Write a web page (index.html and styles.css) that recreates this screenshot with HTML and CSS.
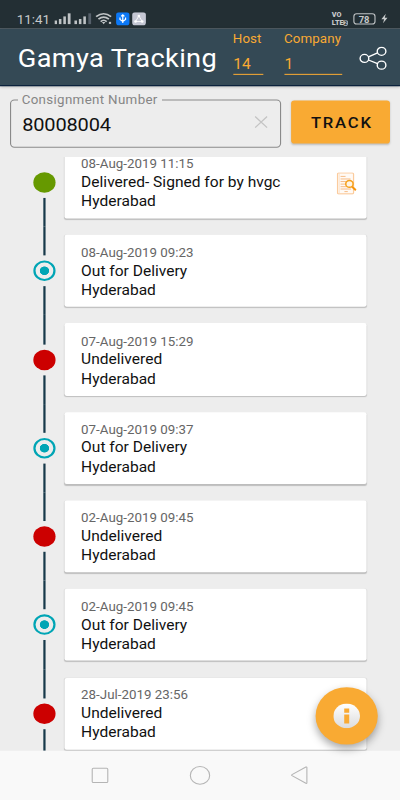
FILE: index.html
```html
<!DOCTYPE html>
<html lang="en">
<head>
<meta charset="utf-8">
<title>Gamya Tracking</title>
<link rel="stylesheet" href="styles.css">
</head>
<body>
<div class="screen">
  <div class="status">
    <span class="clock">11:41</span>
    <svg class="signals" width="97" height="14" viewBox="0 0 97 14">
      <g fill="#bfc3c5"><rect x="0" y="8" width="2.3" height="3.5"/><rect x="4" y="6.5" width="2.3" height="5"/><rect x="8" y="4" width="2.3" height="7.5"/><rect x="12" y="1" width="2.5" height="10.5"/>
      <rect x="18" y="8" width="2.3" height="3.5"/><rect x="22" y="6.5" width="2.3" height="5"/><rect x="26" y="4" width="2.3" height="7.5"/></g>
      <rect x="30.5" y="1" width="2.5" height="10.5" fill="#56606a"/>
      <g fill="none" stroke="#bfc3c5" stroke-width="1.6"><path d="M37.500 4.300Q44.300 -1.500 51 4.300"/><path d="M39.600 6.700Q44.300 2.500 49 6.700"/><path d="M41.600 9Q44.300 6.500 47 9"/></g>
      <path d="M42.700 9.500h3.200l-1.600 2.200z" fill="#bfc3c5"/><rect x="49" y="9.300" width="2" height="2" fill="#bfc3c5"/>
      <rect x="55.500" y="0" width="12" height="12.700" rx="2.500" fill="#0c78f6"/>
      <path d="M61.500 2.500v8M59 5v2l2.500 2 2.500-2V5M60 4l1.500-1.500L63 4" fill="none" stroke="#fff" stroke-width="1.100"/>
      <rect x="70" y="0" width="12.300" height="12.700" rx="2.500" fill="#c5c7d3"/>
      <path d="M76 3.500l-3 5.500h6z" fill="none" stroke="#fff" stroke-width=".8"/><g fill="#fff"><circle cx="76" cy="3.600" r="1.200"/><circle cx="73" cy="9" r="1.200"/><circle cx="79" cy="9" r="1.200"/></g>
    </svg>
    <span class="volte"><span>VO</span><span>LTE<b>2</b></span></span>
    <span class="battery">78</span>
    <svg class="bolt" width="6" height="10" viewBox="0 0 6 10"><path d="M4.200.3L.2 5.700h2.500l-1 4L5.800 4.200H3.300z" fill="#c6c9ca"/></svg>
  </div>
  <header class="appbar">
    <h1>Gamya Tracking</h1>
    <div class="field host"><label>Host</label><span>14</span></div>
    <div class="field company"><label>Company</label><span>1</span></div>
    <svg class="share" width="26" height="24" viewBox="0 0 26 24" fill="none" stroke="#fff" stroke-width="1.250"><circle cx="5" cy="12" r="3.900"/><circle cx="20.400" cy="5" r="3.900"/><circle cx="20.400" cy="18.500" r="3.900"/><path d="M8.600 10.400l8.200-3.800M8.600 13.500l8.200 3.600"/></svg>
  </header>
  <div class="search">
    <fieldset class="number"><legend>Consignment Number</legend>
      <div class="value"><span>80008004</span><svg width="12" height="12" viewBox="0 0 12 12"><path d="M.6.6l10.800 10.800M11.400.6L.6 11.400" stroke="#c4c4c4" stroke-width="1.200"/></svg></div>
    </fieldset>
    <button class="track">TRACK</button>
  </div>
  <main class="list">
    <div class="row first"><div class="rail"><i></i><b class="dot green"></b><i></i></div><div class="card"><time>08-Aug-2019 11:15</time><p>Delivered- Signed for by hvgc</p><p>Hyderabad</p>
      <svg class="doc" width="18" height="22" viewBox="0 0 18 22" fill="none"><rect x=".7" y=".7" width="14.500" height="20.300" rx="1" fill="#fffaf5" stroke="#fbcb9d" stroke-width="1.100"/><path d="M2.200 1v20" stroke="#fbdcc0" stroke-width=".8"/><path d="M3.500 4h4.500M3.500 6.500h9M3.500 9h5M3.500 11.500h5M3.500 14h6M3.500 16.300h9.500M7 18.800h3" stroke="#f6b983" stroke-width=".9"/><circle cx="11.500" cy="11.300" r="3.300" fill="#fff4e5" stroke="#f6a11c" stroke-width="1.400"/><path d="M13.800 14l3.500 3.500" stroke="#f6950c" stroke-width="1.900"/></svg></div></div>
    <div class="row"><div class="rail"><i></i><b class="dot ring"></b><i></i></div><div class="card"><time>08-Aug-2019 09:23</time><p>Out for Delivery</p><p>Hyderabad</p></div></div>
    <div class="row"><div class="rail"><i></i><b class="dot red"></b><i></i></div><div class="card"><time>07-Aug-2019 15:29</time><p>Undelivered</p><p>Hyderabad</p></div></div>
    <div class="row"><div class="rail"><i></i><b class="dot ring"></b><i></i></div><div class="card"><time>07-Aug-2019 09:37</time><p>Out for Delivery</p><p>Hyderabad</p></div></div>
    <div class="row"><div class="rail"><i></i><b class="dot red"></b><i></i></div><div class="card"><time>02-Aug-2019 09:45</time><p>Undelivered</p><p>Hyderabad</p></div></div>
    <div class="row"><div class="rail"><i></i><b class="dot ring"></b><i></i></div><div class="card"><time>02-Aug-2019 09:45</time><p>Out for Delivery</p><p>Hyderabad</p></div></div>
    <div class="row"><div class="rail"><i></i><b class="dot red"></b><i></i></div><div class="card"><time>28-Jul-2019 23:56</time><p>Undelivered</p><p>Hyderabad</p></div></div>
  </main>
  <nav class="nav">
    <svg width="360" height="48" viewBox="0 0 360 48" fill="none" stroke="#b5b5b5" stroke-width="1"><rect x="83" y="17" width="14" height="14" rx="1"/><circle cx="180" cy="24" r="8.700"/><path d="M276.200 16.400v14.800q0 .9-.9.500l-12.500-7.400q-.6-.5 0-1l12.500-7.400q.9-.4.900.5z"/></svg>
  </nav>
  <div class="fab"><svg width="24" height="24" viewBox="0 0 24 24"><defs><linearGradient id="g" x2="0" y2="1"><stop stop-color="#fff"/><stop offset="1" stop-color="#dcdcdc"/></linearGradient></defs><circle cx="12" cy="12" r="12" fill="url(#g)"/><path d="M9.800 4.700h4.500v4.300H9.800zM9.800 10.700h4.500v8.700H9.800z" fill="#f9aa33"/></svg></div>
</div>
</body>
</html>
```

FILE: styles.css
```css
* { box-sizing: border-box; margin: 0; padding: 0; }
html, body { width: 400px; height: 800px; overflow: hidden; }
body { font-family: Roboto, "Liberation Sans", sans-serif; color: #1a1a1a; background: #ededed; }
/* 360x780 dp layout stretched to the window */
.screen { position: relative; width: 360px; height: 780px; transform: scale(1.11111, 1.025641); transform-origin: 0 0; display: flex; flex-direction: column; background: #ededed; overflow: hidden; }
.status { height: 28.300px; flex: none; background: #232f34; color: #c6c9ca; display: flex; align-items: flex-start; padding: 11.700px 0 0 15.200px; }
.clock { width: 34px; flex: none; font-size: 12px; line-height: 14px; letter-spacing: 0; font-weight: 400; }
.signals { flex: none; }
.volte { flex: none; margin-left: 152.500px; width: 16px; font-size: 6.500px; line-height: 7px; font-weight: 900; letter-spacing: -.1px; display: flex; flex-direction: column; }
.volte span { display: flex; align-items: center; white-space: nowrap; height: 7px; }
.volte b { background: #c6c9ca; color: #232f34; font-size: 5px; line-height: 5px; border-radius: 1px; padding: 0 .5px; }
.battery { flex: none; width: 20px; height: 11.500px; margin: 1px 0 0 3px; border: 1px solid #bfc3c5; border-radius: 3px; font-size: 8.500px; line-height: 10px; font-weight: 700; text-align: center; }
.bolt { flex: none; margin: 1.500px 0 0 5px; }
.appbar { height: 55.700px; flex: none; background: #344955; border-bottom: 1px solid #051c3a; display: flex; box-shadow: 0 1px 3px rgba(0,0,0,.25); padding-left: 16px; }
h1 { width: 193.500px; flex: none; font-size: 24.500px; line-height: 56px; font-weight: 400; color: #fff; letter-spacing: .3px; white-space: nowrap; padding-top: 1px; }
.field { flex: none; color: #f9aa33; display: flex; flex-direction: column; margin-right: 18.500px; }
.field label { font-size: 12px; line-height: 14px; margin-top: 2.500px; letter-spacing: .1px; }
.field span { font-size: 14px; line-height: 17px; margin-top: 7.500px; height: 21px; padding-left: .5px; border-bottom: 1.200px solid #f9aa33; padding-top: 1.500px; }
.host { width: 27.500px; }
.company { width: 52px; }
.share { flex: none; margin: 16.500px 0 0 -3.500px; }
.search { height: 69.500px; flex: none; display: flex; padding: 6.500px 0 0 9px; }
.number { width: 244px; height: 53.500px; border: 1px solid #8a8a8a; border-radius: 4px; padding: 0 11px 0 10px; }
legend { font-size: 12px; line-height: 14px; color: #858585; letter-spacing: .3px; padding: 0 4px; margin-left: -4.500px; }
.value { display: flex; align-items: center; justify-content: space-between; font-size: 18px; height: 31px; padding-top: 3px; color: #111; letter-spacing: -.15px; }
.value svg { margin-top: -4px; }
.track { width: 89px; height: 42px; margin: 7.500px 0 0 9.200px; border: 0; border-radius: 3px; background: #f9aa33; box-shadow: 0 1px 2px rgba(0,0,0,.2); font: 500 15px Roboto, sans-serif; letter-spacing: 1.600px; padding: 2px 0 0 2px; color: #111; }
.list { flex: 1; overflow: hidden; min-height: 0; }
.row { display: flex; height: 86.300px; }
.first { margin-top: -18.700px; }
.rail { flex: none; width: 43px; padding-left: 37px; display: flex; flex-direction: column; align-items: center; }
.rail i { flex: none; width: 2px; height: 28.150px; background: #17394a; }
.first .rail i:first-child { visibility: hidden; }
.dot { width: 20px; height: 20px; border-radius: 50%; margin: 5px 0; flex: none; }
.green { background: #669900; }
.red { background: #cc0000; }
.ring { border: 2px solid #00a5b5; background: radial-gradient(circle, #00a5b5 3.900px, transparent 4.500px); }
.card { position: relative; width: 272.300px; height: 70.200px; margin: 8px 0 0 15px; padding: 9.500px 0 0 15px; background: #fff; border-radius: 2px; box-shadow: 0 1px 1px rgba(0,0,0,.2); }
time { display: block; font-size: 12px; line-height: 16px; color: #666; }
.card p { font-size: 14px; line-height: 19px; white-space: nowrap; color: #111; }
.doc { position: absolute; left: 244.500px; top: 25px; }
.nav { height: 48px; flex: none; background: #f9f9f9; }
.nav svg { display: block; }
.fab { position: absolute; left: 284px; top: 670px; width: 56px; height: 56px; border-radius: 50%; background: #f9aa33; box-shadow: 0 4px 8px rgba(0,0,0,.35); display: grid; place-items: center; }
```
